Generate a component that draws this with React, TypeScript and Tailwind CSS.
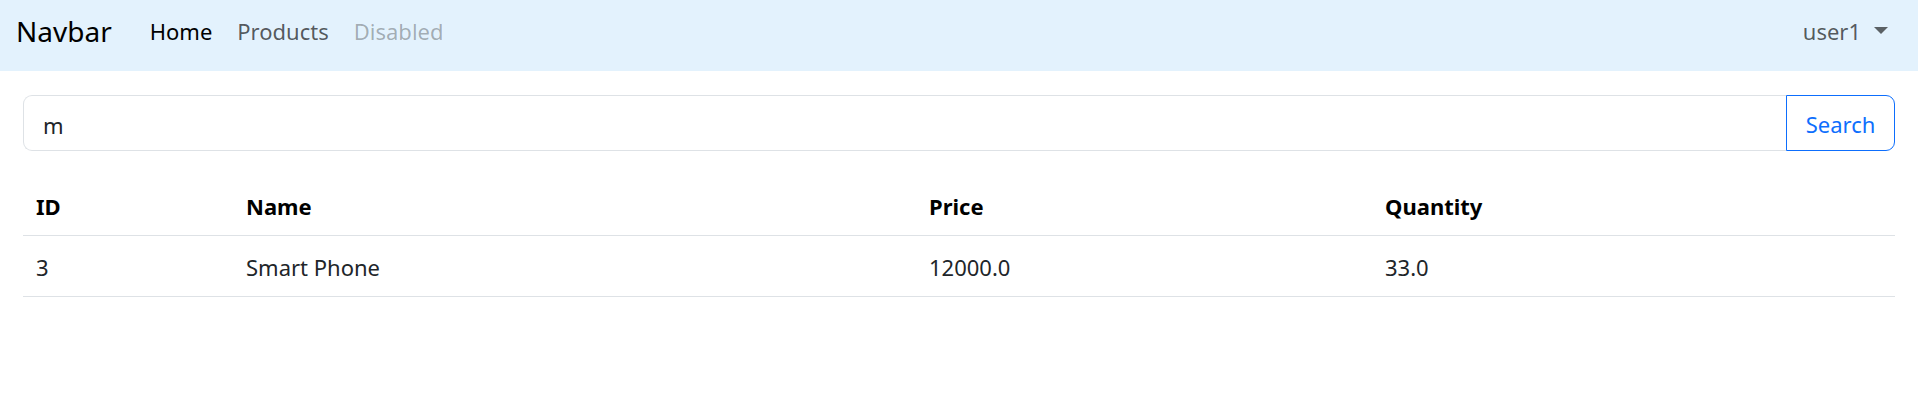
export default function App() {
  const font = { fontFamily: '"Noto Sans", "Open Sans", sans-serif' };
  return (
    <div className="min-h-[406px] bg-white" style={font}>
      <nav className="flex h-[71px] items-center bg-[#e3f2fd] pb-[10px] pl-[16px] pr-[30px]">
        <span className="mr-[26px] text-[28px] leading-none text-black">Navbar</span>
        <ul className="flex items-center text-[22px] leading-none">
          <li className="px-[12px] text-black">Home</li>
          <li className="px-[13px] text-black/65">Products</li>
          <li className="px-[12px] text-black/30">Disabled</li>
        </ul>
        <div className="ml-auto flex items-center text-[22px] leading-none text-black/65">
          <span>user1</span>
          <svg className="ml-[13px]" width="14" height="7" viewBox="0 0 14 7">
            <path d="M0 0 L14 0 L7 7 Z" fill="rgba(0,0,0,0.6)" />
          </svg>
        </div>
      </nav>
      <div className="px-[23px] pt-[24px]">
        <div className="flex h-[56px]">
          <div className="flex flex-1 items-center rounded-l-[9px] border border-r-0 border-[#dee2e6] pl-[19px] pt-[4px] text-[22px] text-[#212529]">
            m
          </div>
          <button className="flex w-[109px] items-center justify-center rounded-r-[9px] border border-[#0d6efd] pt-[3px] text-[22px] text-[#0d6efd]">
            Search
          </button>
        </div>
        <div className="mt-[24px] text-[22px]">
          <div className="flex h-[61px] items-center border-b border-[#dee2e6] pt-[2px] font-bold text-black">
            <div className="w-[211px] px-[13px]">ID</div>
            <div className="w-[683px] px-[12px]">Name</div>
            <div className="w-[456px] px-[12px]">Price</div>
            <div className="flex-1 px-[12px]">Quantity</div>
          </div>
          <div className="flex h-[61px] items-center border-b border-[#dee2e6] pt-[3px] text-[#212529]">
            <div className="w-[211px] px-[13px]">3</div>
            <div className="w-[683px] px-[12px]">Smart Phone</div>
            <div className="w-[456px] px-[12px]">12000.0</div>
            <div className="flex-1 px-[12px]">33.0</div>
          </div>
        </div>
      </div>
    </div>
  );
}
